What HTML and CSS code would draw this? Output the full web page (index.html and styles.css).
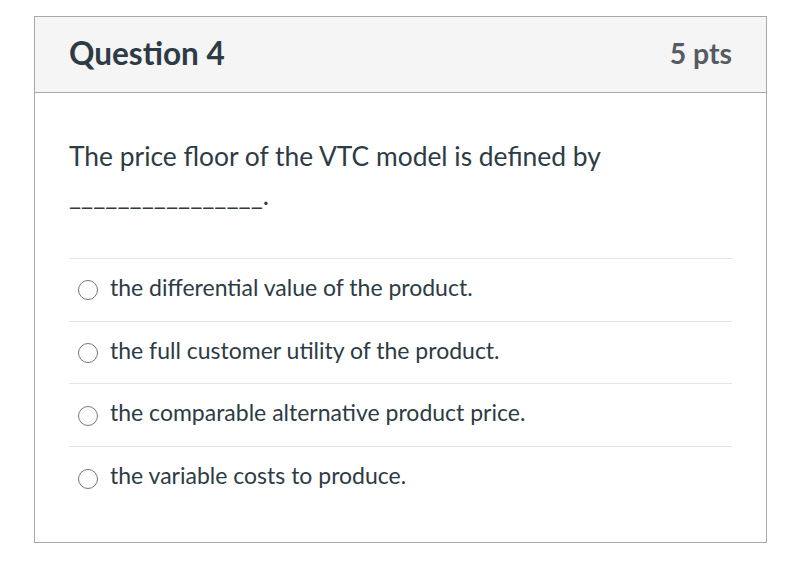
FILE: index.html
```html
<!DOCTYPE html>
<html>
<head>
<meta charset="utf-8">
<link rel="stylesheet" href="styles.css">
</head>
<body>
<div class="card">
  <div class="header">
    <h2 class="title">Question 4</h2>
    <div class="pts">5 pts</div>
  </div>
  <div class="content">
    <p class="question">The price floor of the VTC model is defined by ________________.</p>
    <div class="answers">
      <div class="answer"><span class="radio"></span><span class="label">the differential value of the product.</span></div>
      <div class="answer"><span class="radio"></span><span class="label">the full customer utility of the product.</span></div>
      <div class="answer"><span class="radio"></span><span class="label">the comparable alternative product price.</span></div>
      <div class="answer"><span class="radio"></span><span class="label">the variable costs to produce.</span></div>
    </div>
  </div>
</div>
</body>
</html>
```
FILE: styles.css
```css
html, body { margin: 0; padding: 0; background: #fff; }
body { font-family: Lato, "Open Sans", sans-serif; color: #2d3b45; }
.card {
  margin: 16px 0 0 34px;
  width: 731px;
  height: 525px;
  border: 1px solid #a8a8a8;
}
.header {
  background: #f5f5f5;
  border-bottom: 1px solid #a8a8a8;
  display: flex;
  align-items: center;
  justify-content: space-between;
  padding: 0 34px 4px;
  box-sizing: border-box;
  height: 76px;
}
.title { margin: 0; font-size: 31.5px; font-weight: 700; color: #2d3b45; }
.pts { font-size: 28.4px; font-weight: 700; color: #545b62; }
.content { padding: 44px 34px 0; }
.question { margin: 0 0 43px; font-size: 26.4px; line-height: 39px; width: 600px; }
.answers { border-top: 1px solid #e3e5e7; }
.answer {
  display: flex;
  align-items: center;
  box-sizing: border-box;
  height: 62.7px;
  border-bottom: 1px solid #e3e5e7;
}
.answer:last-child { border-bottom: none; }
.radio {
  border: 1px solid #777;
  border-radius: 50%;
  margin: 1px 12px 0 9px;
  box-sizing: border-box;
  width: 20px; height: 20px;
  flex: none;
}
.label { font-size: 23px; padding-bottom: 6px; }
```
